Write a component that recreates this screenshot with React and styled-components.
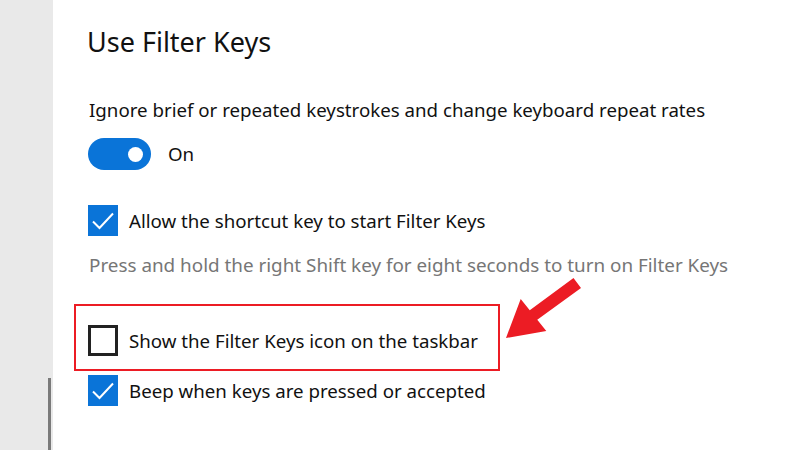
import React from "react";
import styled, { createGlobalStyle } from "styled-components";

const Global = createGlobalStyle`
  html, body { margin: 0; padding: 0; background: #ffffff; }
  body { font-family: "Noto Sans", "Open Sans", sans-serif; color: #111; }
  #root { width: 800px; height: 450px; overflow: hidden; }
`;

const Page = styled.div`
  position: relative;
  display: flex;
  width: 800px;
  height: 450px;
  background: #fff;
`;

const Sidebar = styled.aside`
  width: 53px;
  flex: none;
  background: #e9e9e9;
  display: flex;
  flex-direction: column;
  justify-content: flex-end;
  align-items: flex-end;
`;

const ScrollThumb = styled.div`
  width: 3px;
  height: 72px;
  margin-right: 2px;
  background: #7a7a7a;
`;

const Main = styled.main`
  flex: 1;
  padding: 24px 0 0 34px;
  display: flex;
  flex-direction: column;
  align-items: flex-start;
`;

const Title = styled.h1`
  margin: 0;
  font-weight: 400;
  font-size: 27px;
  line-height: 36px;
  color: #111;
`;

const Description = styled.p`
  margin: 38px 0 0 2px;
  font-size: 18.7px;
  line-height: 24px;
  color: #111;
`;

const ToggleRow = styled.div`
  display: flex;
  align-items: center;
  gap: 17px;
  margin: 16px 0 0 1px;
  height: 32px;
`;

const Toggle = styled.div`
  width: 63px;
  height: 32px;
  border-radius: 16px;
  background: #0a74d8;
  display: flex;
  align-items: center;
  justify-content: flex-end;
  padding-right: 8px;
  box-sizing: border-box;
`;

const Knob = styled.span`
  width: 15px;
  height: 15px;
  border-radius: 50%;
  background: #fff;
`;

const Label = styled.span`
  font-size: 18.7px;
  line-height: 24px;
  color: #111;
`;

const CheckRow = styled.div`
  display: flex;
  align-items: center;
  gap: 11px;
  height: 31px;
  margin-left: 1px;
  margin-top: ${(p) => p.$top || 0}px;
  box-sizing: content-box;
  ${(p) =>
    p.$highlight &&
    `
    border: 2px solid #ec1c24;
    margin-left: -13px;
    padding: 19px 20px 13px 12px;
  `}
`;

const Box = styled.span`
  width: 30px;
  height: 31px;
  box-sizing: border-box;
  flex: none;
  display: flex;
  align-items: center;
  justify-content: center;
  background: ${(p) => (p.$checked ? "#0a74d8" : "#fff")};
  border: ${(p) => (p.$checked ? "none" : "3px solid #222")};
`;

const Hint = styled.p`
  margin: 17px 0 0 2px;
  font-size: 18.85px;
  line-height: 24px;
  color: #767676;
`;

const ArrowSvg = styled.svg`
  position: absolute;
  left: 0;
  top: 0;
  pointer-events: none;
`;

const Check = () => (
  <svg width="24" height="20" viewBox="0 0 24 20">
    <path d="M2 10.5 L8.5 17 L22 2.5" fill="none" stroke="#fff" strokeWidth="2" />
  </svg>
);

const CheckBox = ({ checked }) => (
  <Box $checked={checked}>{checked && <Check />}</Box>
);

export default function App() {
  return (
    <Page>
      <Global />
      <Sidebar>
        <ScrollThumb />
      </Sidebar>
      <Main>
        <Title>Use Filter Keys</Title>
        <Description>Ignore brief or repeated keystrokes and change keyboard repeat rates</Description>
        <ToggleRow>
          <Toggle>
            <Knob />
          </Toggle>
          <Label>On</Label>
        </ToggleRow>
        <CheckRow $top={35}>
          <CheckBox checked />
          <Label>Allow the shortcut key to start Filter Keys</Label>
        </CheckRow>
        <Hint>Press and hold the right Shift key for eight seconds to turn on Filter Keys</Hint>
        <CheckRow $top={27} $highlight>
          <CheckBox />
          <Label>Show the Filter Keys icon on the taskbar</Label>
        </CheckRow>
        <CheckRow $top={4}>
          <CheckBox checked />
          <Label>Beep when keys are pressed or accepted</Label>
        </CheckRow>
      </Main>
      <ArrowSvg width="800" height="450" viewBox="0 0 800 450">
        <polygon
          points="573.5,278 529.75,310.3 520.7,298.9 506,338 546.3,331.1 537.25,319.7 581,288"
          fill="#ec1c24"
        />
      </ArrowSvg>
    </Page>
  );
}
